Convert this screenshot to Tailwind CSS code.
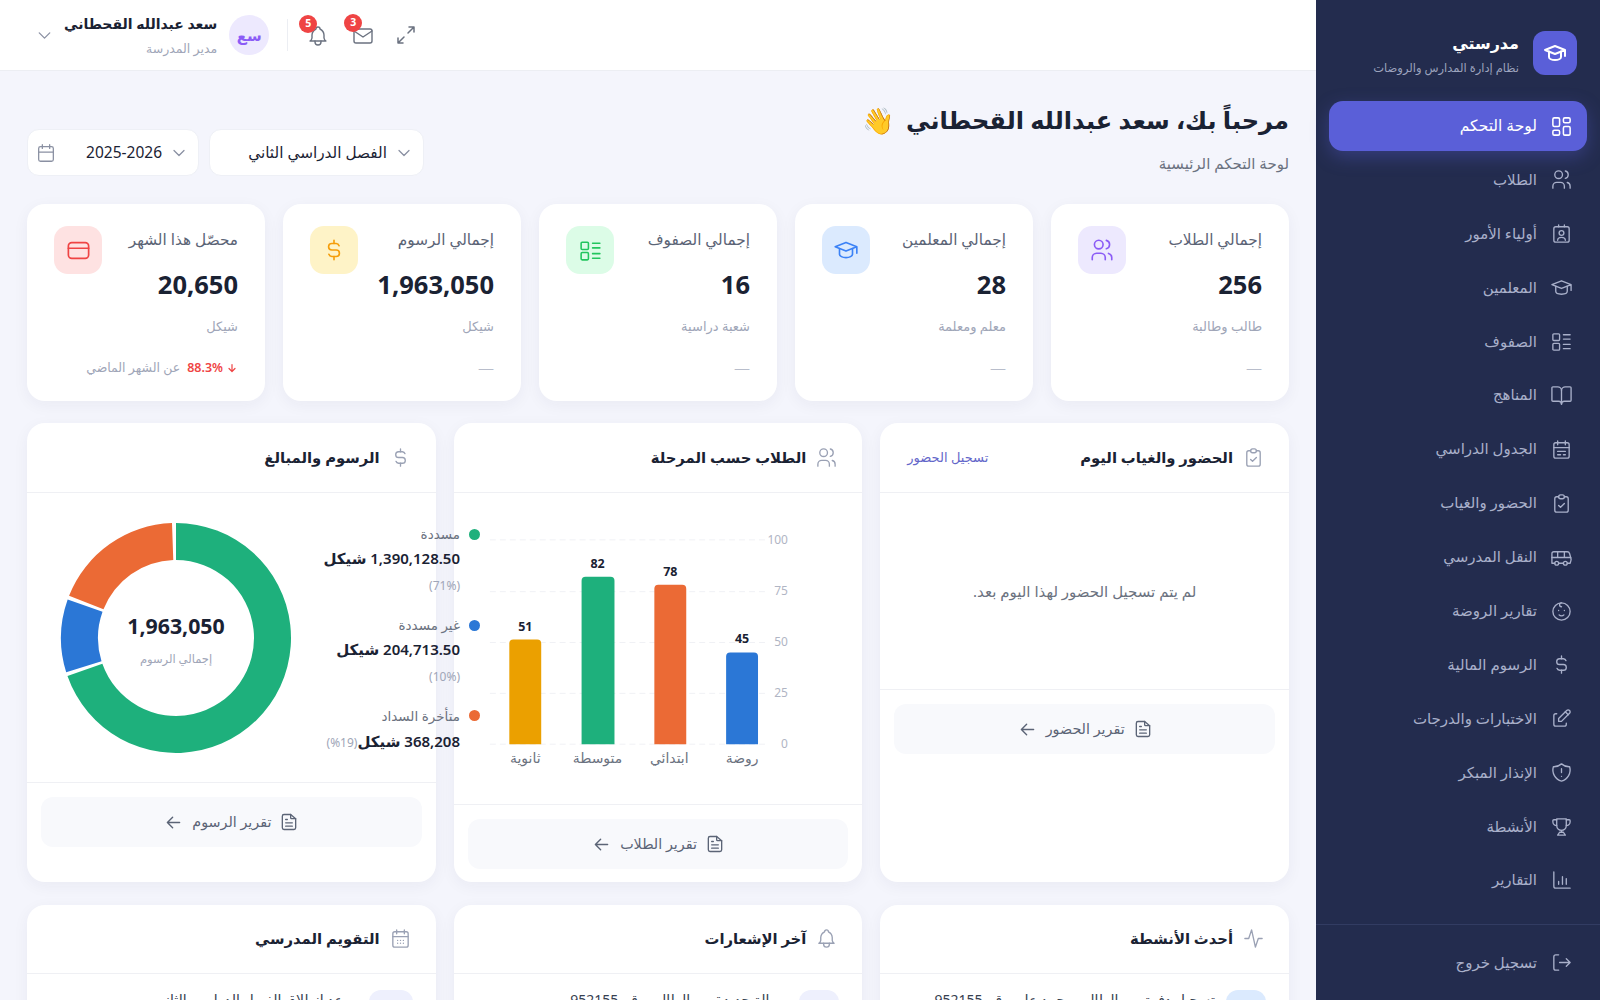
<!DOCTYPE html>
<html lang="ar" dir="rtl">
<head>
<meta charset="UTF-8">
<title>مدرستي - لوحة التحكم</title>
<script src="https://cdn.jsdelivr.net/npm/@tailwindcss/browser@4"></script>
</head>
<body class="bg-[#f4f5fc] font-['Noto_Sans','DejaVu_Sans',sans-serif] text-[#1a2233]">
<div class="flex h-[1000px] overflow-hidden">

  <!-- Sidebar -->
  <aside class="w-[284px] shrink-0 bg-[#232c4e] flex flex-col text-[#a9b0ca]">
    <div class="h-[101px] pt-[31px] pr-[23px] flex items-start gap-[14px]">
      <div class="w-[44px] h-[44px] rounded-xl bg-[#5a5fd8] flex items-center justify-center text-white">
        <svg class="w-[24px] h-[24px]" viewBox="0 0 24 24" fill="none" stroke="currentColor" stroke-width="2" stroke-linecap="round" stroke-linejoin="round"><path d="M22 9l-10-4-10 4 10 4 10-4v6"/><path d="M6 10.600v5.400a6 3 0 0 0 12 0v-5.400"/></svg>
      </div>
      <div>
        <div class="text-[16px] leading-[24px] font-bold text-white">مدرستي</div>
        <div class="text-[11.500px] leading-[18px] mt-[4px] text-[#9ca3bd]">نظام إدارة المدارس والروضات</div>
      </div>
    </div>
    <nav class="px-[13px] flex flex-col gap-[3.9px] text-[15px] leading-[20px]">
      <a class="h-[50px] flex items-center gap-[13px] pr-[14px] pb-[2px] rounded-[14px] bg-[#5a5fd8] text-white font-medium text-[15.500px] shadow-[0_6px_18px_rgba(90,95,216,0.35)]">
        <svg class="w-[23px] h-[23px] mt-[2px]" viewBox="0 0 24 24" fill="none" stroke="currentColor" stroke-width="1.6" stroke-linejoin="round"><rect x="3" y="3" width="7" height="9" rx="1.500"/><rect x="14" y="3" width="7" height="5" rx="1.500"/><rect x="14" y="12" width="7" height="9" rx="1.500"/><rect x="3" y="16" width="7" height="5" rx="1.500"/></svg>
        <span>لوحة التحكم</span></a>
      <a class="h-[50px] flex items-center gap-[13px] pr-[14px] pb-[2px]">
        <svg class="w-[23px] h-[23px] mt-[2px]" viewBox="0 0 24 24" fill="none" stroke="currentColor" stroke-width="1.4" stroke-linecap="round" stroke-linejoin="round"><circle cx="9" cy="7" r="4"/><path d="M3 21v-2a4 4 0 0 1 4-4h4a4 4 0 0 1 4 4v2"/><path d="M16 3.130a4 4 0 0 1 0 7.750"/><path d="M21 21v-2a4 4 0 0 0-3-3.850"/></svg>
        <span>الطلاب</span></a>
      <a class="h-[50px] flex items-center gap-[13px] pr-[14px] pb-[2px]">
        <svg class="w-[23px] h-[23px] mt-[2px]" viewBox="0 0 24 24" fill="none" stroke="currentColor" stroke-width="1.4" stroke-linecap="round" stroke-linejoin="round"><rect x="4" y="5" width="16" height="16" rx="2"/><path d="M9 3v2M15 3v2"/><circle cx="12" cy="11.500" r="2.500"/><path d="M8 19a4 3 0 0 1 8 0"/></svg>
        <span>أولياء الأمور</span></a>
      <a class="h-[50px] flex items-center gap-[13px] pr-[14px] pb-[2px]">
        <svg class="w-[23px] h-[23px] mt-[2px]" viewBox="0 0 24 24" fill="none" stroke="currentColor" stroke-width="1.4" stroke-linecap="round" stroke-linejoin="round"><path d="M22 9l-10-4-10 4 10 4 10-4v6"/><path d="M6 10.600v5.400a6 3 0 0 0 12 0v-5.400"/></svg>
        <span>المعلمين</span></a>
      <a class="h-[50px] flex items-center gap-[13px] pr-[14px] pb-[2px]">
        <svg class="w-[23px] h-[23px] mt-[2px]" viewBox="0 0 24 24" fill="none" stroke="currentColor" stroke-width="1.4" stroke-linecap="round" stroke-linejoin="round"><rect x="3" y="4" width="7" height="7" rx="1"/><rect x="3" y="14" width="7" height="7" rx="1"/><path d="M14 5h7M14 9.500h7M14 15h7M14 19.500h7"/></svg>
        <span>الصفوف</span></a>
      <a class="h-[50px] flex items-center gap-[13px] pr-[14px] pb-[2px]">
        <svg class="w-[23px] h-[23px] mt-[2px]" viewBox="0 0 24 24" fill="none" stroke="currentColor" stroke-width="1.4" stroke-linecap="round" stroke-linejoin="round"><path d="M12 7v14"/><path d="M3 18a1 1 0 0 1-1-1V4a1 1 0 0 1 1-1h5a4 4 0 0 1 4 4 4 4 0 0 1 4-4h5a1 1 0 0 1 1 1v13a1 1 0 0 1-1 1h-6a3 3 0 0 0-3 3 3 3 0 0 0-3-3z"/></svg>
        <span>المناهج</span></a>
      <a class="h-[50px] flex items-center gap-[13px] pr-[14px] pb-[2px]">
        <svg class="w-[23px] h-[23px] mt-[2px]" viewBox="0 0 24 24" fill="none" stroke="currentColor" stroke-width="1.4" stroke-linecap="round" stroke-linejoin="round"><rect x="4" y="5" width="16" height="16" rx="2"/><path d="M16 3v4M8 3v4M4 10h16M8 14h8M8 17.500h3M14 17.500h2"/></svg>
        <span>الجدول الدراسي</span></a>
      <a class="h-[50px] flex items-center gap-[13px] pr-[14px] pb-[2px]">
        <svg class="w-[23px] h-[23px] mt-[2px]" viewBox="0 0 24 24" fill="none" stroke="currentColor" stroke-width="1.4" stroke-linecap="round" stroke-linejoin="round"><path d="M9 5H7a2 2 0 0 0-2 2v12a2 2 0 0 0 2 2h10a2 2 0 0 0 2-2V7a2 2 0 0 0-2-2h-2"/><rect x="9" y="3" width="6" height="4" rx="2"/><path d="M9 14l2 2 4-4"/></svg>
        <span>الحضور والغياب</span></a>
      <a class="h-[50px] flex items-center gap-[13px] pr-[14px] pb-[2px]">
        <svg class="w-[23px] h-[23px] mt-[2px]" viewBox="0 0 24 24" fill="none" stroke="currentColor" stroke-width="1.4" stroke-linecap="round" stroke-linejoin="round"><path d="M8 6v6M15 6v6M2 12h19.600"/><path d="M18 18h3s.5-1.700.8-2.800c.1-.4.2-.8.2-1.200 0-.4-.1-.8-.2-1.200l-1.400-5C20.100 6.800 19.100 6 18 6H4a2 2 0 0 0-2 2v10h3"/><circle cx="7" cy="18" r="2"/><path d="M9 18h5"/><circle cx="16" cy="18" r="2"/></svg>
        <span>النقل المدرسي</span></a>
      <a class="h-[50px] flex items-center gap-[13px] pr-[14px] pb-[2px]">
        <svg class="w-[23px] h-[23px] mt-[2px]" viewBox="0 0 24 24" fill="none" stroke="currentColor" stroke-width="1.4" stroke-linecap="round" stroke-linejoin="round"><circle cx="12" cy="12" r="9"/><path d="M9 11h.01M15 11h.01M9.500 15.500a3.500 3.500 0 0 0 5 0"/><path d="M12 3a2 2 0 0 0 0 4"/></svg>
        <span>تقارير الروضة</span></a>
      <a class="h-[50px] flex items-center gap-[13px] pr-[14px] pb-[2px]">
        <svg class="w-[23px] h-[23px] mt-[2px]" viewBox="0 0 24 24" fill="none" stroke="currentColor" stroke-width="1.4" stroke-linecap="round" stroke-linejoin="round"><path d="M16.700 8a3 3 0 0 0-2.700-2h-4a3 3 0 0 0 0 6h4a3 3 0 0 1 0 6h-4a3 3 0 0 1-2.700-2"/><path d="M12 3v3m0 12v3"/></svg>
        <span>الرسوم المالية</span></a>
      <a class="h-[50px] flex items-center gap-[13px] pr-[14px] pb-[2px]">
        <svg class="w-[23px] h-[23px] mt-[2px]" viewBox="0 0 24 24" fill="none" stroke="currentColor" stroke-width="1.4" stroke-linecap="round" stroke-linejoin="round"><path d="M7 7h-1a2 2 0 0 0-2 2v9a2 2 0 0 0 2 2h9a2 2 0 0 0 2-2v-1"/><path d="M20.385 6.585a2.100 2.100 0 0 0-2.970-2.970l-8.415 8.385v3h3l8.385-8.415z"/><path d="M16 5l3 3"/></svg>
        <span>الاختبارات والدرجات</span></a>
      <a class="h-[50px] flex items-center gap-[13px] pr-[14px] pb-[2px]">
        <svg class="w-[23px] h-[23px] mt-[2px]" viewBox="0 0 24 24" fill="none" stroke="currentColor" stroke-width="1.4" stroke-linecap="round" stroke-linejoin="round"><path d="M12 3a12 12 0 0 0 8.500 3 12 12 0 0 1-8.500 15A12 12 0 0 1 3.500 6 12 12 0 0 0 12 3"/><path d="M12 8v4M12 16h.01"/></svg>
        <span>الإنذار المبكر</span></a>
      <a class="h-[50px] flex items-center gap-[13px] pr-[14px] pb-[2px]">
        <svg class="w-[23px] h-[23px] mt-[2px]" viewBox="0 0 24 24" fill="none" stroke="currentColor" stroke-width="1.4" stroke-linecap="round" stroke-linejoin="round"><path d="M7 4h10v7a5 5 0 0 1-10 0z"/><path d="M7 5H4a1 1 0 0 0-1 1v1a4 4 0 0 0 4 4M17 5h3a1 1 0 0 1 1 1v1a4 4 0 0 1-4 4"/><path d="M12 16v2M8 21h8l-2-3h-4z"/></svg>
        <span>الأنشطة</span></a>
      <a class="h-[50px] flex items-center gap-[13px] pr-[14px] pb-[2px]">
        <svg class="w-[23px] h-[23px] mt-[2px]" viewBox="0 0 24 24" fill="none" stroke="currentColor" stroke-width="1.4" stroke-linecap="round" stroke-linejoin="round"><path d="M4 3v15a2 2 0 0 0 2 2h15"/><path d="M9 16v-3M13 16V8M17 16v-6"/></svg>
        <span>التقارير</span></a>
    </nav>
    <div class="mt-auto h-[76px] border-t border-[#323c62] px-[13px] flex items-center text-[15px]">
      <div class="flex items-center gap-[13px] pr-[14px]">
        <svg class="w-[23px] h-[23px]" viewBox="0 0 24 24" fill="none" stroke="currentColor" stroke-width="1.4" stroke-linecap="round" stroke-linejoin="round"><path d="M9 4H6a2 2 0 0 0-2 2v12a2 2 0 0 0 2 2h3"/><path d="M10 12h11M17 8l4 4-4 4"/></svg>
        <span>تسجيل خروج</span>
      </div>
    </div>
  </aside>

  <!-- Main -->
  <main class="flex-1 min-w-0 overflow-hidden">
    <header class="h-[71px] bg-white border-b border-[#eceef3] flex items-center pr-[16px] pl-[34px]" dir="ltr">
      <svg class="w-[21px] h-[21px] text-[#8a90a2]" viewBox="0 0 24 24" fill="none" stroke="currentColor" stroke-width="1.500" stroke-linecap="round" stroke-linejoin="round"><path d="M6 9l6 6 6-6"/></svg>
      <div class="ml-[9px] mr-[12px] text-right" dir="rtl">
        <div class="text-[14px] leading-[22px] mt-[1px] font-semibold">سعد عبدالله القحطاني</div>
        <div class="text-[12.500px] leading-[18px] mt-[5px] text-[#a0a6b8]">مدير المدرسة</div>
      </div>
      <div class="w-[40px] h-[40px] rounded-full bg-[#ede9fe] text-[#8b5cf6] text-[15px] font-bold flex items-center justify-center">سع</div>
      <div class="w-px h-[32px] bg-[#eceef3] mx-[18px]"></div>
      <div class="relative w-[24px] h-[24px] text-[#6b7280] mt-[1px]">
        <svg class="w-[24px] h-[24px]" viewBox="0 0 24 24" fill="none" stroke="currentColor" stroke-width="1.400" stroke-linecap="round" stroke-linejoin="round"><path d="M10 5a2 2 0 1 1 4 0 7 7 0 0 1 4 6v3a4 4 0 0 0 2 3H4a4 4 0 0 0 2-3v-3a7 7 0 0 1 4-6"/><path d="M9 17v1a3 3 0 0 0 6 0v-1"/></svg>
        <span class="absolute -top-[9px] -left-[7px] w-[18px] h-[18px] rounded-full bg-[#ef4444] text-white text-[10.500px] font-bold flex items-center justify-center">5</span>
      </div>
      <div class="relative w-[24px] h-[24px] ml-[21px] text-[#6b7280] mt-[2px]">
        <svg class="w-[24px] h-[24px]" viewBox="0 0 24 24" fill="none" stroke="currentColor" stroke-width="1.400" stroke-linecap="round" stroke-linejoin="round"><rect x="3" y="5" width="18" height="14" rx="2"/><path d="M3 7l9 6 9-6"/></svg>
        <span class="absolute -top-[10px] -left-[7px] w-[18px] h-[18px] rounded-full bg-[#ef4444] text-white text-[10.500px] font-bold flex items-center justify-center">3</span>
      </div>
      <svg class="w-[24px] h-[24px] ml-[19px] text-[#6b7280]" viewBox="0 0 24 24" fill="none" stroke="currentColor" stroke-width="1.500" stroke-linecap="round" stroke-linejoin="round"><path d="M4 20l6-6M4 15v5h5M20 4l-6 6M15 4h5v5"/></svg>
    </header>

    <div class="px-[27px]">
      <!-- Welcome -->
      <div class="h-[133px] flex items-start justify-between pt-[29px]">
        <div>
          <h1 class="text-[24.100px] leading-[40px] font-bold flex items-center gap-[12px]">مرحباً بك، سعد عبدالله القحطاني <span class="text-[26px]">👋</span></h1>
          <p class="text-[15px] leading-[22px] mt-[12px] text-[#6b7280]">لوحة التحكم الرئيسية</p>
        </div>
        <div class="flex gap-[10px] mt-[29px] text-[15.500px]">
          <div class="w-[215px] h-[47px] bg-white border border-[#eef0f6] rounded-xl flex items-center gap-[7px] pr-[9px]">
            <svg class="w-5 h-5 text-[#8a90a2]" viewBox="0 0 24 24" fill="none" stroke="currentColor" stroke-width="1.500" stroke-linecap="round" stroke-linejoin="round"><path d="M6 9l6 6 6-6"/></svg>
            <span class="text-[15.300px]">الفصل الدراسي الثاني</span>
          </div>
          <div class="w-[172px] h-[47px] bg-white border border-[#eef0f6] rounded-xl flex items-center pr-[9px] pl-[7px] gap-[7px]">
            <svg class="w-5 h-5 text-[#8a90a2]" viewBox="0 0 24 24" fill="none" stroke="currentColor" stroke-width="1.500" stroke-linecap="round" stroke-linejoin="round"><path d="M6 9l6 6 6-6"/></svg>
            <span>2025-2026</span>
            <svg class="w-[22px] h-[22px] mr-auto text-[#8a90a2]" viewBox="0 0 24 24" fill="none" stroke="currentColor" stroke-width="1.400" stroke-linecap="round" stroke-linejoin="round"><rect x="4" y="5" width="16" height="16" rx="2"/><path d="M16 3v4M8 3v4M4 11h16"/></svg>
          </div>
        </div>
      </div>

      <!-- Stat cards -->
      <section class="grid grid-cols-5 gap-[18px]">
        <div class="h-[197px] bg-white rounded-[18px] shadow-[0_4px_16px_rgba(30,40,80,0.05)] pt-[22px] px-[27px]">
          <div class="flex justify-between items-start">
            <div class="text-[15.300px] leading-[24px] text-[#5b6476] mt-[1px]">إجمالي الطلاب</div>
            <div class="w-[48px] h-[48px] rounded-[14px] bg-[#ede9fe] text-[#8b5cf6] flex items-center justify-center">
              <svg class="w-[26px] h-[26px]" viewBox="0 0 24 24" fill="none" stroke="currentColor" stroke-width="1.500" stroke-linecap="round" stroke-linejoin="round"><circle cx="9" cy="7" r="4"/><path d="M3 21v-2a4 4 0 0 1 4-4h4a4 4 0 0 1 4 4v2"/><path d="M16 3.130a4 4 0 0 1 0 7.750"/><path d="M21 21v-2a4 4 0 0 0-3-3.850"/></svg>
            </div>
          </div>
          <div class="text-[25.500px] leading-[32px] font-bold -mt-[6px]">256</div>
          <div class="text-[13px] leading-[20px] text-[#a0a6b8] mt-[16px]">طالب وطالبة</div>
          <div class="text-[16px] leading-[20px] text-[#b8bdcb] font-light mt-[22px]">—</div>
        </div>
        <div class="h-[197px] bg-white rounded-[18px] shadow-[0_4px_16px_rgba(30,40,80,0.05)] pt-[22px] px-[27px]">
          <div class="flex justify-between items-start">
            <div class="text-[15.300px] leading-[24px] text-[#5b6476] mt-[1px]">إجمالي المعلمين</div>
            <div class="w-[48px] h-[48px] rounded-[14px] bg-[#dbeafe] text-[#3b82f6] flex items-center justify-center">
              <svg class="w-[26px] h-[26px]" viewBox="0 0 24 24" fill="none" stroke="currentColor" stroke-width="1.500" stroke-linecap="round" stroke-linejoin="round"><path d="M22 9l-10-4-10 4 10 4 10-4v6"/><path d="M6 10.600v5.400a6 3 0 0 0 12 0v-5.400"/></svg>
            </div>
          </div>
          <div class="text-[25.500px] leading-[32px] font-bold -mt-[6px]">28</div>
          <div class="text-[13px] leading-[20px] text-[#a0a6b8] mt-[16px]">معلم ومعلمة</div>
          <div class="text-[16px] leading-[20px] text-[#b8bdcb] font-light mt-[22px]">—</div>
        </div>
        <div class="h-[197px] bg-white rounded-[18px] shadow-[0_4px_16px_rgba(30,40,80,0.05)] pt-[22px] px-[27px]">
          <div class="flex justify-between items-start">
            <div class="text-[15.300px] leading-[24px] text-[#5b6476] mt-[1px]">إجمالي الصفوف</div>
            <div class="w-[48px] h-[48px] rounded-[14px] bg-[#dcfce7] text-[#22c55e] flex items-center justify-center">
              <svg class="w-[25px] h-[25px]" viewBox="0 0 24 24" fill="none" stroke="currentColor" stroke-width="1.500" stroke-linecap="round" stroke-linejoin="round"><rect x="3" y="4" width="7" height="7" rx="1"/><rect x="3" y="14" width="7" height="7" rx="1"/><path d="M14 5h7M14 9.500h7M14 15h7M14 19.500h7"/></svg>
            </div>
          </div>
          <div class="text-[25.500px] leading-[32px] font-bold -mt-[6px]">16</div>
          <div class="text-[13px] leading-[20px] text-[#a0a6b8] mt-[16px]">شعبة دراسية</div>
          <div class="text-[16px] leading-[20px] text-[#b8bdcb] font-light mt-[22px]">—</div>
        </div>
        <div class="h-[197px] bg-white rounded-[18px] shadow-[0_4px_16px_rgba(30,40,80,0.05)] pt-[22px] px-[27px]">
          <div class="flex justify-between items-start">
            <div class="text-[15.300px] leading-[24px] text-[#5b6476] mt-[1px]">إجمالي الرسوم</div>
            <div class="w-[48px] h-[48px] rounded-[14px] bg-[#fef3c7] text-[#f59e0b] flex items-center justify-center">
              <svg class="w-[26px] h-[26px]" viewBox="0 0 24 24" fill="none" stroke="currentColor" stroke-width="1.500" stroke-linecap="round" stroke-linejoin="round"><path d="M16.700 8a3 3 0 0 0-2.700-2h-4a3 3 0 0 0 0 6h4a3 3 0 0 1 0 6h-4a3 3 0 0 1-2.700-2"/><path d="M12 3v3m0 12v3"/></svg>
            </div>
          </div>
          <div class="text-[25.500px] leading-[32px] font-bold -mt-[6px]">1,963,050</div>
          <div class="text-[13px] leading-[20px] text-[#a0a6b8] mt-[16px]">شيكل</div>
          <div class="text-[16px] leading-[20px] text-[#b8bdcb] font-light mt-[22px]">—</div>
        </div>
        <div class="h-[197px] bg-white rounded-[18px] shadow-[0_4px_16px_rgba(30,40,80,0.05)] pt-[22px] px-[27px]">
          <div class="flex justify-between items-start">
            <div class="text-[15.300px] leading-[24px] text-[#5b6476] mt-[1px]">محصّل هذا الشهر</div>
            <div class="w-[48px] h-[48px] rounded-[14px] bg-[#fee2e2] text-[#ef4444] flex items-center justify-center">
              <svg class="w-[27px] h-[27px]" viewBox="0 0 24 24" fill="none" stroke="currentColor" stroke-width="1.500" stroke-linecap="round" stroke-linejoin="round"><rect x="3" y="5" width="18" height="14" rx="3"/><path d="M3 10h18"/></svg>
            </div>
          </div>
          <div class="text-[25.500px] leading-[32px] font-bold -mt-[6px]">20,650</div>
          <div class="text-[13px] leading-[20px] text-[#a0a6b8] mt-[16px]">شيكل</div>
          <div class="text-[12.500px] leading-[20px] text-[#a0a6b8] mt-[22px] flex items-center gap-[7px]">
            <span class="flex items-center gap-[3px] text-[#ef4444] font-semibold">
              <svg class="w-3 h-3" viewBox="0 0 24 24" fill="none" stroke="currentColor" stroke-width="2.400" stroke-linecap="round" stroke-linejoin="round"><path d="M12 5v14M18 13l-6 6M6 13l6 6"/></svg>
              88.3%</span>
            <span>عن الشهر الماضي</span>
          </div>
        </div>
      </section>

      <!-- Charts row -->
      <section class="grid grid-cols-3 gap-[18px] mt-[22px]">
        <div class="bg-white rounded-[18px] shadow-[0_4px_16px_rgba(30,40,80,0.05)]">
          <div class="h-[70px] border-b border-[#eff0f4] flex items-center justify-between pr-[24px] pl-[27px]">
            <div class="flex items-center gap-[9px] text-[14.800px] font-semibold">
              <svg class="w-[23px] h-[23px] text-[#9aa1b4]" viewBox="0 0 24 24" fill="none" stroke="currentColor" stroke-width="1.400" stroke-linecap="round" stroke-linejoin="round"><path d="M9 5H7a2 2 0 0 0-2 2v12a2 2 0 0 0 2 2h10a2 2 0 0 0 2-2V7a2 2 0 0 0-2-2h-2"/><rect x="9" y="3" width="6" height="4" rx="2"/><path d="M9 14l2 2 4-4"/></svg>
              الحضور والغياب اليوم
            </div>
            <a class="text-[13px] text-[#6366c9]">تسجيل الحضور</a>
          </div>
          <div class="h-[197px] border-b border-[#eff0f4] flex items-center justify-center text-[15px] text-[#6b7280]">لم يتم تسجيل الحضور لهذا اليوم بعد.</div>
          <div class="px-[14px] pt-[14px]">
            <div class="h-[50px] rounded-xl bg-[#f8f9fc] flex items-center justify-center gap-[8px] text-[14.300px] text-[#5b6476]">
              <svg class="w-5 h-5" viewBox="0 0 24 24" fill="none" stroke="currentColor" stroke-width="1.600" stroke-linecap="round" stroke-linejoin="round"><path d="M14 3v4a1 1 0 0 0 1 1h5"/><path d="M18 21H6a2 2 0 0 1-2-2V5a2 2 0 0 1 2-2h8l6 5v11a2 2 0 0 1-2 2z"/><path d="M8 9h2M8 13h8M8 17h8"/></svg>
              <span>تقرير الحضور</span>
              <svg class="w-[21px] h-[21px]" viewBox="0 0 24 24" fill="none" stroke="currentColor" stroke-width="1.600" stroke-linecap="round" stroke-linejoin="round"><path d="M5 12h14M5 12l6 6M5 12l6-6"/></svg>
            </div>
          </div>
        </div>

        <div class="bg-white rounded-[18px] shadow-[0_4px_16px_rgba(30,40,80,0.05)]">
          <div class="h-[70px] border-b border-[#eff0f4] flex items-center pr-[24px] pl-[27px]">
            <div class="flex items-center gap-[9px] text-[14.800px] font-semibold">
              <svg class="w-[23px] h-[23px] text-[#9aa1b4]" viewBox="0 0 24 24" fill="none" stroke="currentColor" stroke-width="1.400" stroke-linecap="round" stroke-linejoin="round"><circle cx="9" cy="7" r="4"/><path d="M3 21v-2a4 4 0 0 1 4-4h4a4 4 0 0 1 4 4v2"/><path d="M16 3.130a4 4 0 0 1 0 7.750"/><path d="M21 21v-2a4 4 0 0 0-3-3.850"/></svg>
              الطلاب حسب المرحلة
            </div>
          </div>
          <svg class="block w-full h-[312px] border-b border-[#eff0f4]" viewBox="0 0 408 312" font-size="12">
            <path d="M35 47H312M35 99H312M35 150H312M35 201H312M35 252H312" stroke="#f0f1f5" stroke-dasharray="6 4"/>
            <g fill="#b0b5c4" text-anchor="end" direction="ltr">
              <text x="334" y="51">100</text><text x="334" y="102.500">75</text><text x="334" y="153.500">50</text><text x="334" y="204.500">25</text><text x="334" y="255.500">0</text>
            </g>
            <path d="M272 252V164a4 4 0 0 1 4-4h24a4 4 0 0 1 4 4v88z" fill="#2b77d6"/>
            <path d="M200 252V96a4 4 0 0 1 4-4h24a4 4 0 0 1 4 4v156z" fill="#eb6a35"/>
            <path d="M127 252V88a4 4 0 0 1 4-4h25a4 4 0 0 1 4 4v164z" fill="#1eb07c"/>
            <path d="M54.500 252V151a4 4 0 0 1 4-4h24a4 4 0 0 1 4 4v101z" fill="#eba000"/>
            <g fill="#1a2233" font-weight="700" text-anchor="middle" font-size="12.500">
              <text x="288" y="150">45</text><text x="216" y="83">78</text><text x="143" y="75">82</text><text x="70.500" y="138">51</text>
            </g>
            <g fill="#6b7280" text-anchor="middle" font-size="14">
              <text x="288" y="271">روضة</text><text x="215" y="271">ابتدائي</text><text x="143" y="271">متوسطة</text><text x="70.500" y="271">ثانوية</text>
            </g>
          </svg>
          <div class="px-[14px] pt-[14px] pb-[13px]">
            <div class="h-[50px] rounded-xl bg-[#f8f9fc] flex items-center justify-center gap-[8px] text-[14.300px] text-[#5b6476]">
              <svg class="w-5 h-5" viewBox="0 0 24 24" fill="none" stroke="currentColor" stroke-width="1.600" stroke-linecap="round" stroke-linejoin="round"><path d="M14 3v4a1 1 0 0 0 1 1h5"/><path d="M18 21H6a2 2 0 0 1-2-2V5a2 2 0 0 1 2-2h8l6 5v11a2 2 0 0 1-2 2z"/><path d="M8 9h2M8 13h8M8 17h8"/></svg>
              <span>تقرير الطلاب</span>
              <svg class="w-[21px] h-[21px]" viewBox="0 0 24 24" fill="none" stroke="currentColor" stroke-width="1.600" stroke-linecap="round" stroke-linejoin="round"><path d="M5 12h14M5 12l6 6M5 12l6-6"/></svg>
            </div>
          </div>
        </div>

        <div class="bg-white rounded-[18px] shadow-[0_4px_16px_rgba(30,40,80,0.05)]">
          <div class="h-[70px] border-b border-[#eff0f4] flex items-center pr-[24px] pl-[27px]">
            <div class="flex items-center gap-[9px] text-[14.800px] font-semibold">
              <svg class="w-[23px] h-[23px] text-[#9aa1b4]" viewBox="0 0 24 24" fill="none" stroke="currentColor" stroke-width="1.400" stroke-linecap="round" stroke-linejoin="round"><path d="M16.700 8a3 3 0 0 0-2.700-2h-4a3 3 0 0 0 0 6h4a3 3 0 0 1 0 6h-4a3 3 0 0 1-2.700-2"/><path d="M12 3v3m0 12v3"/></svg>
              الرسوم والمبالغ
            </div>
          </div>
          <div class="h-[290px] border-b border-[#eff0f4] flex items-center pl-[33px]" dir="ltr">
            <div class="relative w-[232px] h-[232px] shrink-0">
              <svg class="w-[232px] h-[232px]" viewBox="0 0 232 232">
                <path d="M116 1A115 115 0 1 1 7.460 154L42.380 141.780A78 78 0 1 0 116 38Z" fill="#1eb07c"/>
                <path d="M6.200 150.200A115 115 0 0 1 7.660 77.420L42.520 89.830A78 78 0 0 0 41.530 139.200Z" fill="#2b77d6"/>
                <path d="M9.070 73.670A115 115 0 0 1 111.990 1.070L113.280 38.050A78 78 0 0 0 43.480 87.290Z" fill="#eb6a35"/>
              </svg>
              <div class="absolute inset-0 pt-[4px] flex flex-col items-center justify-center text-center">
                <div class="text-[21.300px] leading-[28px] font-bold">1,963,050</div>
                <div class="text-[11.500px] leading-[18px] mt-[10px] text-[#a0a6b8]" dir="rtl">إجمالي الرسوم</div>
              </div>
            </div>
            <div class="w-[152px] ml-[36px] mt-[2px] shrink-0 flex flex-col gap-[11.800px] relative" dir="rtl">
              <div class="flex gap-[9px]">
                <span class="w-[11px] h-[11px] rounded-full bg-[#1eb07c] shrink-0 mt-[6.500px]"></span>
                <div>
                  <div class="text-[13.500px] leading-[24px] text-[#6b7280]">مسددة</div>
                  <div class="font-semibold text-[15px] leading-[25px] whitespace-nowrap">1,390,128.50 شيكل</div>
                  <div class="text-[12px] leading-[30px] text-[#a0a6b8]">(71%)</div>
                </div>
              </div>
              <div class="flex gap-[9px]">
                <span class="w-[11px] h-[11px] rounded-full bg-[#2b77d6] shrink-0 mt-[6.500px]"></span>
                <div>
                  <div class="text-[13.500px] leading-[24px] text-[#6b7280]">غير مسددة</div>
                  <div class="font-semibold text-[15px] leading-[25px] whitespace-nowrap">204,713.50 شيكل</div>
                  <div class="text-[12px] leading-[30px] text-[#a0a6b8]">(10%)</div>
                </div>
              </div>
              <div class="flex gap-[9px]">
                <span class="w-[11px] h-[11px] rounded-full bg-[#eb6a35] shrink-0 mt-[6.500px]"></span>
                <div>
                  <div class="text-[13.500px] leading-[24px] text-[#6b7280]">متأخرة السداد</div>
                  <div class="leading-[25px] mt-[1px] whitespace-nowrap"><span class="font-semibold text-[15px]">368,208 شيكل</span><span class="text-[12px] text-[#a0a6b8]">(19%)</span></div>
                </div>
              </div>
            </div>
          </div>
          <div class="px-[14px] pt-[14px]">
            <div class="h-[50px] rounded-xl bg-[#f8f9fc] flex items-center justify-center gap-[8px] text-[14.300px] text-[#5b6476]">
              <svg class="w-5 h-5" viewBox="0 0 24 24" fill="none" stroke="currentColor" stroke-width="1.600" stroke-linecap="round" stroke-linejoin="round"><path d="M14 3v4a1 1 0 0 0 1 1h5"/><path d="M18 21H6a2 2 0 0 1-2-2V5a2 2 0 0 1 2-2h8l6 5v11a2 2 0 0 1-2 2z"/><path d="M8 9h2M8 13h8M8 17h8"/></svg>
              <span>تقرير الرسوم</span>
              <svg class="w-[21px] h-[21px]" viewBox="0 0 24 24" fill="none" stroke="currentColor" stroke-width="1.600" stroke-linecap="round" stroke-linejoin="round"><path d="M5 12h14M5 12l6 6M5 12l6-6"/></svg>
            </div>
          </div>
        </div>
      </section>

      <!-- Bottom row -->
      <section class="grid grid-cols-3 gap-[18px] mt-[23px]">
        <div class="bg-white rounded-[18px] shadow-[0_4px_16px_rgba(30,40,80,0.05)] h-[200px]">
          <div class="h-[69px] pb-[2px] border-b border-[#eff0f4] flex items-center pr-[24px] pl-[27px]">
            <div class="flex items-center gap-[9px] text-[14.800px] font-semibold">
              <svg class="w-[23px] h-[23px] text-[#9aa1b4]" viewBox="0 0 24 24" fill="none" stroke="currentColor" stroke-width="1.400" stroke-linecap="round" stroke-linejoin="round"><path d="M3 12h4l3-9 4 18 3-9h4"/></svg>
              أحدث الأنشطة
            </div>
          </div>
          <div class="flex items-start gap-[11px] pt-[16px] pr-[23px] text-[14px] leading-[20px]">
            <div class="w-[40px] h-[40px] rounded-xl bg-[#dbeafe]"></div>
            <div class="text-[#374151]">تسجيل دفعة من الطالب محمد علي رقم 952155</div>
          </div>
        </div>
        <div class="bg-white rounded-[18px] shadow-[0_4px_16px_rgba(30,40,80,0.05)] h-[200px]">
          <div class="h-[69px] pb-[2px] border-b border-[#eff0f4] flex items-center pr-[24px] pl-[27px]">
            <div class="flex items-center gap-[9px] text-[14.800px] font-semibold">
              <svg class="w-[23px] h-[23px] text-[#9aa1b4]" viewBox="0 0 24 24" fill="none" stroke="currentColor" stroke-width="1.400" stroke-linecap="round" stroke-linejoin="round"><path d="M10 5a2 2 0 1 1 4 0 7 7 0 0 1 4 6v3a4 4 0 0 0 2 3H4a4 4 0 0 0 2-3v-3a7 7 0 0 1 4-6"/><path d="M9 17v1a3 3 0 0 0 6 0v-1"/></svg>
              آخر الإشعارات
            </div>
          </div>
          <div class="flex items-start gap-[11px] pt-[16px] pr-[23px] text-[14px] leading-[20px]">
            <div class="w-[40px] h-[40px] rounded-xl bg-[#eef0fd]"></div>
            <div class="text-[#374151]">رسالة جديدة من الطالب رقم 952155</div>
          </div>
        </div>
        <div class="bg-white rounded-[18px] shadow-[0_4px_16px_rgba(30,40,80,0.05)] h-[200px]">
          <div class="h-[69px] pb-[2px] border-b border-[#eff0f4] flex items-center pr-[24px] pl-[27px]">
            <div class="flex items-center gap-[9px] text-[14.800px] font-semibold">
              <svg class="w-[23px] h-[23px] text-[#9aa1b4]" viewBox="0 0 24 24" fill="none" stroke="currentColor" stroke-width="1.400" stroke-linecap="round" stroke-linejoin="round"><rect x="4" y="5" width="16" height="16" rx="2"/><path d="M16 3v4M8 3v4M4 10h16M9 14h.01M12 14h.01M15 14h.01M9 17h.01M12 17h.01M15 17h.01"/></svg>
              التقويم المدرسي
            </div>
          </div>
          <div class="flex items-start gap-[11px] pt-[16px] pr-[23px] text-[14px] leading-[20px]">
            <div class="w-[44px] h-[40px] rounded-xl bg-[#eef0fd]"></div>
            <div class="text-[#374151]">موعد انطلاق الفصل الدراسي الثاني</div>
          </div>
        </div>
      </section>
    </div>
  </main>
</div>
</body>
</html>
